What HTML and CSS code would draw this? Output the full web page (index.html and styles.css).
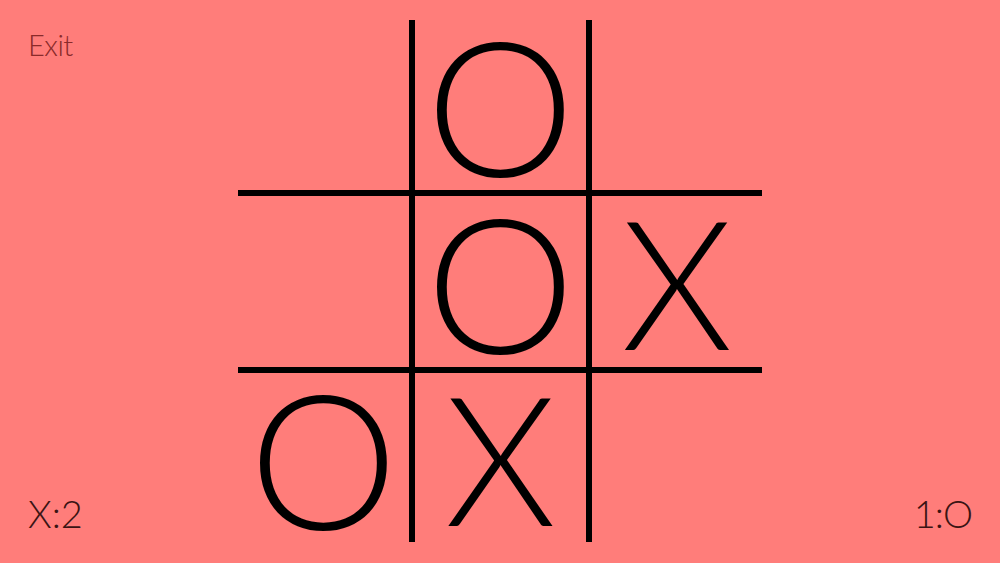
FILE: index.html
```html
<!DOCTYPE html>
<html>
<head>
<meta charset="utf-8">
<title>Tic Tac Toe</title>
<link rel="stylesheet" href="styles.css">
</head>
<body>
<main class="page">
  <aside class="side side-left">
    <a class="exit" href="#">Exit</a>
    <div class="score">X:2</div>
  </aside>
  <section class="board">
    <div class="cell"></div>
    <div class="cell mark-o">O</div>
    <div class="cell"></div>
    <div class="cell"></div>
    <div class="cell mark-o">O</div>
    <div class="cell mark-x">X</div>
    <div class="cell mark-o">O</div>
    <div class="cell mark-x">X</div>
    <div class="cell"></div>
  </section>
  <aside class="side side-right">
    <div class="score">1:O</div>
  </aside>
</main>
</body>
</html>
```
FILE: styles.css
```css
html, body {
  margin: 0;
  padding: 0;
}
body {
  background: #ff7d7a;
  font-family: Lato, "Liberation Sans", sans-serif;
  font-weight: 300;
}
.page {
  width: 1000px;
  height: 563px;
  display: grid;
  grid-template-columns: 238px 524px 238px;
  overflow: hidden;
}
.side {
  display: flex;
  flex-direction: column;
  justify-content: space-between;
  padding: 30px 0 31px 28px;
}
.side-right {
  justify-content: flex-end;
  align-items: flex-end;
  padding: 0 28px 31px 0;
}
.exit {
  font-size: 29px;
  line-height: 1;
  letter-spacing: -0.5px;
  color: #8a2a2a;
  text-decoration: none;
}
.score {
  font-size: 38px;
  line-height: 1;
  color: #3a1414;
}
.side-right .score {
  letter-spacing: -1px;
}
.board {
  margin-top: 20px;
  height: 522px;
  display: grid;
  grid-template-columns: 171px 171px 170px;
  grid-template-rows: 170px 171px 169px;
  gap: 6px;
  background: #000;
}
.cell {
  background: #ff7d7a;
  display: flex;
  align-items: center;
  justify-content: center;
  line-height: 0.85;
  color: #000;
  overflow: hidden;
}
.mark-x {
  font-size: 179px;
}
.mark-o {
  font-size: 188px;
  font-weight: 300;
}
```
